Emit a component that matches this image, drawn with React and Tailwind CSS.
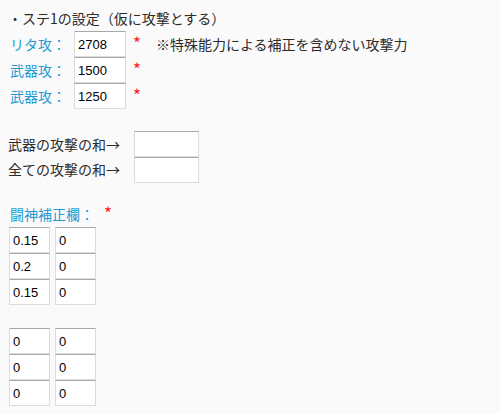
import React from "react";

const jp = { fontFamily: '"Noto Sans CJK JP", "Noto Sans", sans-serif' };

const Box = ({ value = "", className = "w-[52px]" }) => (
  <input
    readOnly
    value={value}
    className={`${className} h-[26px] bg-white border border-[#dcdcdc] border-t-[#a8a8a8] px-[3px] text-[13px] text-black outline-none`}
    style={{ fontFamily: '"Liberation Sans", Arial, sans-serif' }}
  />
);

const Star = () => <span className="text-[#ff2020] text-[17px] leading-none">*</span>;

export default function App() {
  const stats = [
    ["リタ攻", "2708", true],
    ["武器攻", "1500", false],
    ["武器攻", "1250", false],
  ];
  const hosei1 = [
    ["0.15", "0"],
    ["0.2", "0"],
    ["0.15", "0"],
  ];
  const hosei2 = [
    ["0", "0"],
    ["0", "0"],
    ["0", "0"],
  ];

  return (
    <div className="w-[500px] h-[413px] bg-[#fafafa] text-[#2b2b2b] text-[14px] pl-[8px] pt-[5px]" style={jp}>
      <div className="h-[26px] leading-[26px]">・ステ1の設定（仮に攻撃とする）</div>

      {stats.map(([label, val, note], i) => (
        <div key={i} className="flex items-center h-[26px]">
          <span className="w-[66px] text-[#229bd3] pl-[2px]">{label}：</span>
          <Box value={val} />
          <span className="ml-[7px]">
            <Star />
          </span>
          {note && <span className="ml-[15px]">※特殊能力による補正を含めない攻撃力</span>}
        </div>
      ))}

      <div className="mt-[22px]">
        <div className="flex items-center h-[26px]">
          <span className="w-[126px]">武器の攻撃の和→</span>
          <Box className="w-[65px]" />
        </div>
        <div className="flex items-center h-[25px]">
          <span className="w-[126px]">全ての攻撃の和→</span>
          <Box className="w-[65px]" />
        </div>
      </div>

      <div className="mt-[19px] h-[26px] flex items-center">
        <span className="text-[#229bd3] pl-[2px]">闘神補正欄：</span>
        <span className="ml-[10px]">
          <Star />
        </span>
      </div>

      <div className="pl-[1px]">
        {hosei1.map(([a, b], i) => (
          <div key={i} className="flex gap-[5px] h-[26px]">
            <Box value={a} className="w-[41px]" />
            <Box value={b} className="w-[41px]" />
          </div>
        ))}
      </div>

      <div className="pl-[1px] mt-[23px]">
        {hosei2.map(([a, b], i) => (
          <div key={i} className="flex gap-[5px] h-[26px]">
            <Box value={a} className="w-[41px]" />
            <Box value={b} className="w-[41px]" />
          </div>
        ))}
      </div>
    </div>
  );
}
